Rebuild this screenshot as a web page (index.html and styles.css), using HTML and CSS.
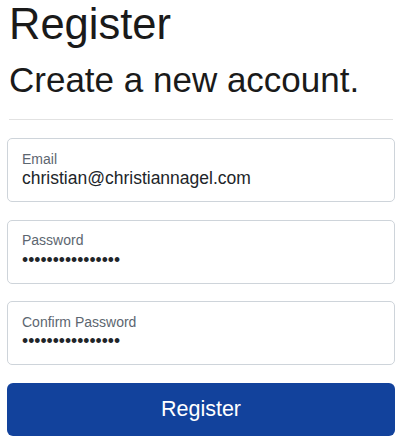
FILE: index.html
```html
<!DOCTYPE html>
<html lang="en">
<head>
<meta charset="utf-8">
<title>Register</title>
<link rel="stylesheet" href="styles.css">
</head>
<body>
<main class="page">
  <h1 class="title">Register</h1>
  <h2 class="subtitle">Create a new account.</h2>
  <hr class="divider">
  <form class="form">
    <div class="field">
      <label class="field-label">Email</label>
      <div class="field-value">christian@christiannagel.com</div>
    </div>
    <div class="field">
      <label class="field-label">Password</label>
      <div class="field-value">••••••••••••••••</div>
    </div>
    <div class="field">
      <label class="field-label">Confirm Password</label>
      <div class="field-value">••••••••••••••••</div>
    </div>
    <button type="button" class="btn-primary">Register</button>
  </form>
</main>
</body>
</html>
```
FILE: styles.css
```css
* { box-sizing: border-box; }
html, body { margin: 0; padding: 0; background: #fff; }
body {
  font-family: "Liberation Sans", Arial, sans-serif;
  color: #212529;
}
.page {
  padding: 0 7px;
}
.title {
  margin: 0;
  font-size: 43.5px;
  line-height: 48px;
  font-weight: 400;
  padding-left: 2px;
  color: #1a1a1a;
}
.subtitle {
  margin: 11px 0 0;
  font-size: 35px;
  line-height: 42px;
  font-weight: 400;
  padding-left: 2px;
  color: #1a1a1a;
}
.divider {
  margin: 18px 2px 18px;
  border: 0;
  border-top: 1px solid #e2e2e2;
  height: 0;
}
.form {
  display: flex;
  flex-direction: column;
}
.field {
  height: 64px;
  margin-bottom: 17.5px;
  border: 1px solid #ced4da;
  border-radius: 5px;
  padding: 11.5px 14px 0;
}
.field-label {
  display: block;
  font-size: 14px;
  line-height: 16px;
  color: #5c6670;
}
.field-value {
  margin-top: 1.5px;
  font-size: 17.5px;
  line-height: 20px;
  color: #212529;
  white-space: nowrap;
}
.btn-primary {
  height: 53px;
  border: 0;
  border-radius: 6px;
  background: #12429c;
  color: #fff;
  font-family: "Liberation Sans", Arial, sans-serif;
  font-size: 21.5px;
  line-height: 53px;
  padding: 0;
  cursor: pointer;
}
```
